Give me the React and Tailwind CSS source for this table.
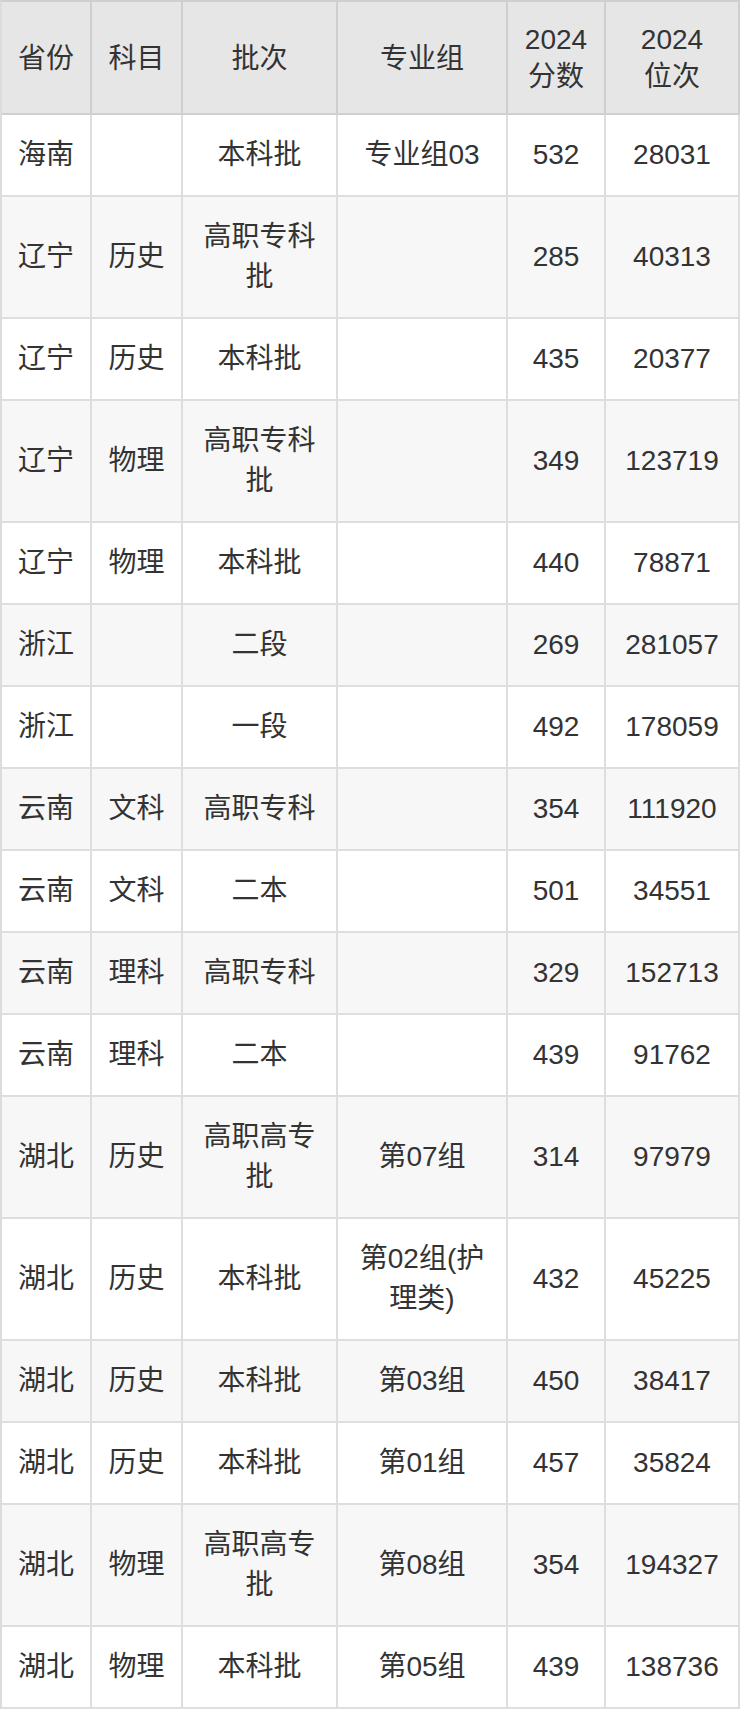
import React from "react";

const rows = [
  ["海南", "", "本科批", "专业组03", "532", "28031"],
  ["辽宁", "历史", "高职专科批", "", "285", "40313"],
  ["辽宁", "历史", "本科批", "", "435", "20377"],
  ["辽宁", "物理", "高职专科批", "", "349", "123719"],
  ["辽宁", "物理", "本科批", "", "440", "78871"],
  ["浙江", "", "二段", "", "269", "281057"],
  ["浙江", "", "一段", "", "492", "178059"],
  ["云南", "文科", "高职专科", "", "354", "111920"],
  ["云南", "文科", "二本", "", "501", "34551"],
  ["云南", "理科", "高职专科", "", "329", "152713"],
  ["云南", "理科", "二本", "", "439", "91762"],
  ["湖北", "历史", "高职高专批", "第07组", "314", "97979"],
  ["湖北", "历史", "本科批", "第02组(护理类)", "432", "45225"],
  ["湖北", "历史", "本科批", "第03组", "450", "38417"],
  ["湖北", "历史", "本科批", "第01组", "457", "35824"],
  ["湖北", "物理", "高职高专批", "第08组", "354", "194327"],
  ["湖北", "物理", "本科批", "第05组", "439", "138736"],
];

const header = [["省份"], ["科目"], ["批次"], ["专业组"], ["2024", "分数"], ["2024", "位次"]];

const gridCols = "grid grid-cols-[90px_91px_155px_170px_98px_134px]";

export default function App() {
  return (
    <div
      className="w-[740px] bg-white text-[28px] text-[#333333]"
      style={{ fontFamily: '"Liberation Sans", "Noto Sans CJK SC", sans-serif' }}
    >
      <div className="border-l-2 border-t-2 border-l-[#dcdcdc] border-t-[#cfcfcf]">
        <div className={`${gridCols} bg-[#e6e6e6]`}>
          {header.map((h, i) => (
            <div
              key={i}
              className="flex flex-col items-center justify-center border-r-2 border-b-2 border-[#cfcfcf] px-[14px] pt-[19px] pb-[18px] text-center leading-[37px]"
            >
              {h.map((t, j) => (
                <span key={j}>{t}</span>
              ))}
            </div>
          ))}
        </div>
        {rows.map((r, ri) => (
          <div key={ri} className={`${gridCols} ${ri % 2 === 1 ? "bg-[#f7f7f7]" : "bg-white"}`}>
            {r.map((c, ci) => (
              <div
                key={ci}
                className="flex items-center justify-center border-r-2 border-b-2 border-[#dedede] px-[14px] py-[20px] text-center leading-[40px]"
              >
                <span>{c}</span>
              </div>
            ))}
          </div>
        ))}
      </div>
    </div>
  );
}
